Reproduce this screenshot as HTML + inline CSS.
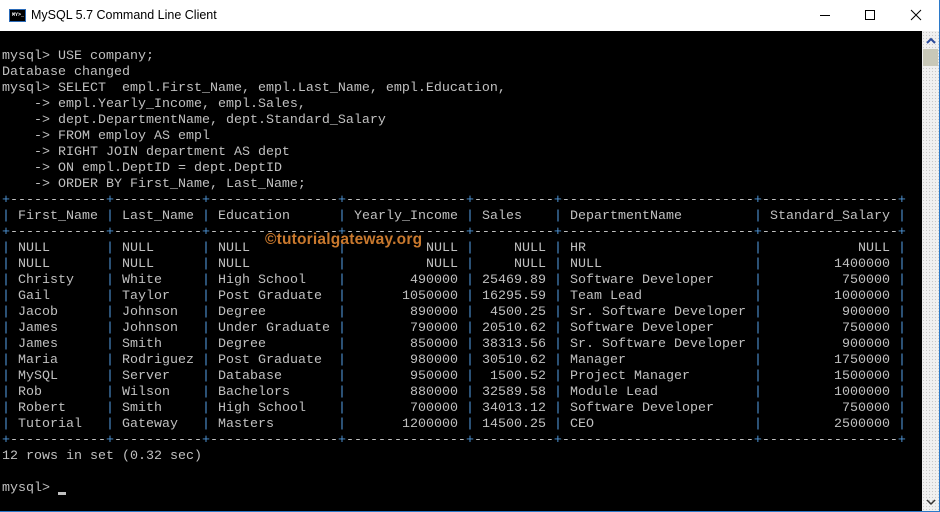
<!DOCTYPE html>
<html><head><meta charset="utf-8"><style>
body{margin:0;width:940px;height:512px;overflow:hidden;background:#fff;position:relative}
.tb{position:absolute;left:0;top:0;width:940px;height:31px;background:#fff;font-family:"Liberation Sans",sans-serif;font-size:12px;color:#000}
.ico{position:absolute;left:9px;top:9px;width:15px;height:11px;background:#000;border:1px solid #2a6ab8}
.ico span{position:absolute;left:2px;top:2px;font:bold 5px "Liberation Mono",monospace;color:#fff}
.title{position:absolute;left:31px;top:8px;font-size:12.5px}
.con{position:absolute;left:0;top:31px;width:922px;height:481px;background:#000}
.sb{position:absolute;left:922px;top:31px;width:17px;height:481px;background:#f0f0f0;background-image:radial-gradient(#c8c8c8 0.6px,transparent 0.8px);background-size:3px 3px}
.thumb{position:absolute;left:923px;top:49px;width:15px;height:17px;background:#c8c8b8}
.rb{position:absolute;left:939px;top:0;width:1px;height:512px;background:#2b79c9}
.bb{position:absolute;left:0;top:511px;width:940px;height:1px;background:#2b79c9}
pre{position:absolute;left:2px;top:49px;margin:0;font-family:"Liberation Mono",monospace;font-size:13.33px;line-height:16px;color:#c0c0c0}
s{text-decoration:none;color:#4f95d6}
i{font-style:normal;display:inline-block;vertical-align:top}
.a{width:80px}.b{width:72px}.c{width:112px}.d{width:104px;text-align:right}.e{width:64px;text-align:right}.f{width:176px}.g{width:120px;text-align:right}.h{width:120px}
.wm{position:absolute;left:265px;top:231px;font-family:"Liberation Sans",sans-serif;font-weight:bold;font-size:15.5px;color:#c8782d;letter-spacing:0.2px}
.cur{position:absolute;left:58px;top:492px;width:8px;height:3px;background:#c0c0c0}
</style></head><body>
<div class="tb"><div class="ico"><span>MY&gt;_</span></div><div class="title">MySQL 5.7 Command Line Client</div>
<svg style="position:absolute;left:810px;top:8px" width="120" height="16"><line x1="10" y1="7.5" x2="20" y2="7.5" stroke="#000"/><rect x="55.5" y="2.5" width="9" height="9" fill="none" stroke="#000"/><path d="M101 2L111 12M111 2L101 12" stroke="#000"/></svg></div>
<div class="con"></div>
<div class="sb"></div><div class="thumb"></div>
<svg style="position:absolute;left:924px;top:36px" width="14" height="10"><path d="M3 7L7 3L11 7" stroke="#2a4a9a" stroke-width="2" fill="none"/></svg>
<svg style="position:absolute;left:924px;top:497px" width="14" height="10"><path d="M3 3L7 7L11 3" stroke="#333" stroke-width="1.5" fill="none"/></svg>
<div class="rb"></div><div class="bb"></div>
<pre>mysql&gt; USE company;
Database changed
mysql&gt; SELECT  empl.First_Name, empl.Last_Name, empl.Education,
    -&gt; empl.Yearly_Income, empl.Sales,
    -&gt; dept.DepartmentName, dept.Standard_Salary
    -&gt; FROM employ AS empl
    -&gt; RIGHT JOIN department AS dept
    -&gt; ON empl.DeptID = dept.DeptID
    -&gt; ORDER BY First_Name, Last_Name;
<s>+</s>------------<s>+</s>-----------<s>+</s>----------------<s>+</s>---------------<s>+</s>----------<s>+</s>------------------------<s>+</s>-----------------<s>+</s>
<s>|</s> <i class=a>First_Name</i> <s>|</s> <i class=b>Last_Name</i> <s>|</s> <i class=c>Education</i> <s>|</s> <i class=a style="width:104px">Yearly_Income</i> <s>|</s> <i class=a style="width:64px">Sales</i> <s>|</s> <i class=f>DepartmentName</i> <s>|</s> <i class=h>Standard_Salary</i> <s>|</s>
<s>+</s>------------<s>+</s>-----------<s>+</s>----------------<s>+</s>---------------<s>+</s>----------<s>+</s>------------------------<s>+</s>-----------------<s>+</s>
<s>|</s> <i class=a>NULL</i> <s>|</s> <i class=b>NULL</i> <s>|</s> <i class=c>NULL</i> <s>|</s> <i class=d>NULL</i> <s>|</s> <i class=e>NULL</i> <s>|</s> <i class=f>HR</i> <s>|</s> <i class=g>NULL</i> <s>|</s>
<s>|</s> <i class=a>NULL</i> <s>|</s> <i class=b>NULL</i> <s>|</s> <i class=c>NULL</i> <s>|</s> <i class=d>NULL</i> <s>|</s> <i class=e>NULL</i> <s>|</s> <i class=f>NULL</i> <s>|</s> <i class=g>1400000</i> <s>|</s>
<s>|</s> <i class=a>Christy</i> <s>|</s> <i class=b>White</i> <s>|</s> <i class=c>High School</i> <s>|</s> <i class=d>490000</i> <s>|</s> <i class=e>25469.89</i> <s>|</s> <i class=f>Software Developer</i> <s>|</s> <i class=g>750000</i> <s>|</s>
<s>|</s> <i class=a>Gail</i> <s>|</s> <i class=b>Taylor</i> <s>|</s> <i class=c>Post Graduate</i> <s>|</s> <i class=d>1050000</i> <s>|</s> <i class=e>16295.59</i> <s>|</s> <i class=f>Team Lead</i> <s>|</s> <i class=g>1000000</i> <s>|</s>
<s>|</s> <i class=a>Jacob</i> <s>|</s> <i class=b>Johnson</i> <s>|</s> <i class=c>Degree</i> <s>|</s> <i class=d>890000</i> <s>|</s> <i class=e>4500.25</i> <s>|</s> <i class=f>Sr. Software Developer</i> <s>|</s> <i class=g>900000</i> <s>|</s>
<s>|</s> <i class=a>James</i> <s>|</s> <i class=b>Johnson</i> <s>|</s> <i class=c>Under Graduate</i> <s>|</s> <i class=d>790000</i> <s>|</s> <i class=e>20510.62</i> <s>|</s> <i class=f>Software Developer</i> <s>|</s> <i class=g>750000</i> <s>|</s>
<s>|</s> <i class=a>James</i> <s>|</s> <i class=b>Smith</i> <s>|</s> <i class=c>Degree</i> <s>|</s> <i class=d>850000</i> <s>|</s> <i class=e>38313.56</i> <s>|</s> <i class=f>Sr. Software Developer</i> <s>|</s> <i class=g>900000</i> <s>|</s>
<s>|</s> <i class=a>Maria</i> <s>|</s> <i class=b>Rodriguez</i> <s>|</s> <i class=c>Post Graduate</i> <s>|</s> <i class=d>980000</i> <s>|</s> <i class=e>30510.62</i> <s>|</s> <i class=f>Manager</i> <s>|</s> <i class=g>1750000</i> <s>|</s>
<s>|</s> <i class=a>MySQL</i> <s>|</s> <i class=b>Server</i> <s>|</s> <i class=c>Database</i> <s>|</s> <i class=d>950000</i> <s>|</s> <i class=e>1500.52</i> <s>|</s> <i class=f>Project Manager</i> <s>|</s> <i class=g>1500000</i> <s>|</s>
<s>|</s> <i class=a>Rob</i> <s>|</s> <i class=b>Wilson</i> <s>|</s> <i class=c>Bachelors</i> <s>|</s> <i class=d>880000</i> <s>|</s> <i class=e>32589.58</i> <s>|</s> <i class=f>Module Lead</i> <s>|</s> <i class=g>1000000</i> <s>|</s>
<s>|</s> <i class=a>Robert</i> <s>|</s> <i class=b>Smith</i> <s>|</s> <i class=c>High School</i> <s>|</s> <i class=d>700000</i> <s>|</s> <i class=e>34013.12</i> <s>|</s> <i class=f>Software Developer</i> <s>|</s> <i class=g>750000</i> <s>|</s>
<s>|</s> <i class=a>Tutorial</i> <s>|</s> <i class=b>Gateway</i> <s>|</s> <i class=c>Masters</i> <s>|</s> <i class=d>1200000</i> <s>|</s> <i class=e>14500.25</i> <s>|</s> <i class=f>CEO</i> <s>|</s> <i class=g>2500000</i> <s>|</s>
<s>+</s>------------<s>+</s>-----------<s>+</s>----------------<s>+</s>---------------<s>+</s>----------<s>+</s>------------------------<s>+</s>-----------------<s>+</s>
12 rows in set (0.32 sec)

mysql&gt; </pre>
<div class="cur"></div>
<div class="wm">©tutorialgateway.org</div>
</body></html>
